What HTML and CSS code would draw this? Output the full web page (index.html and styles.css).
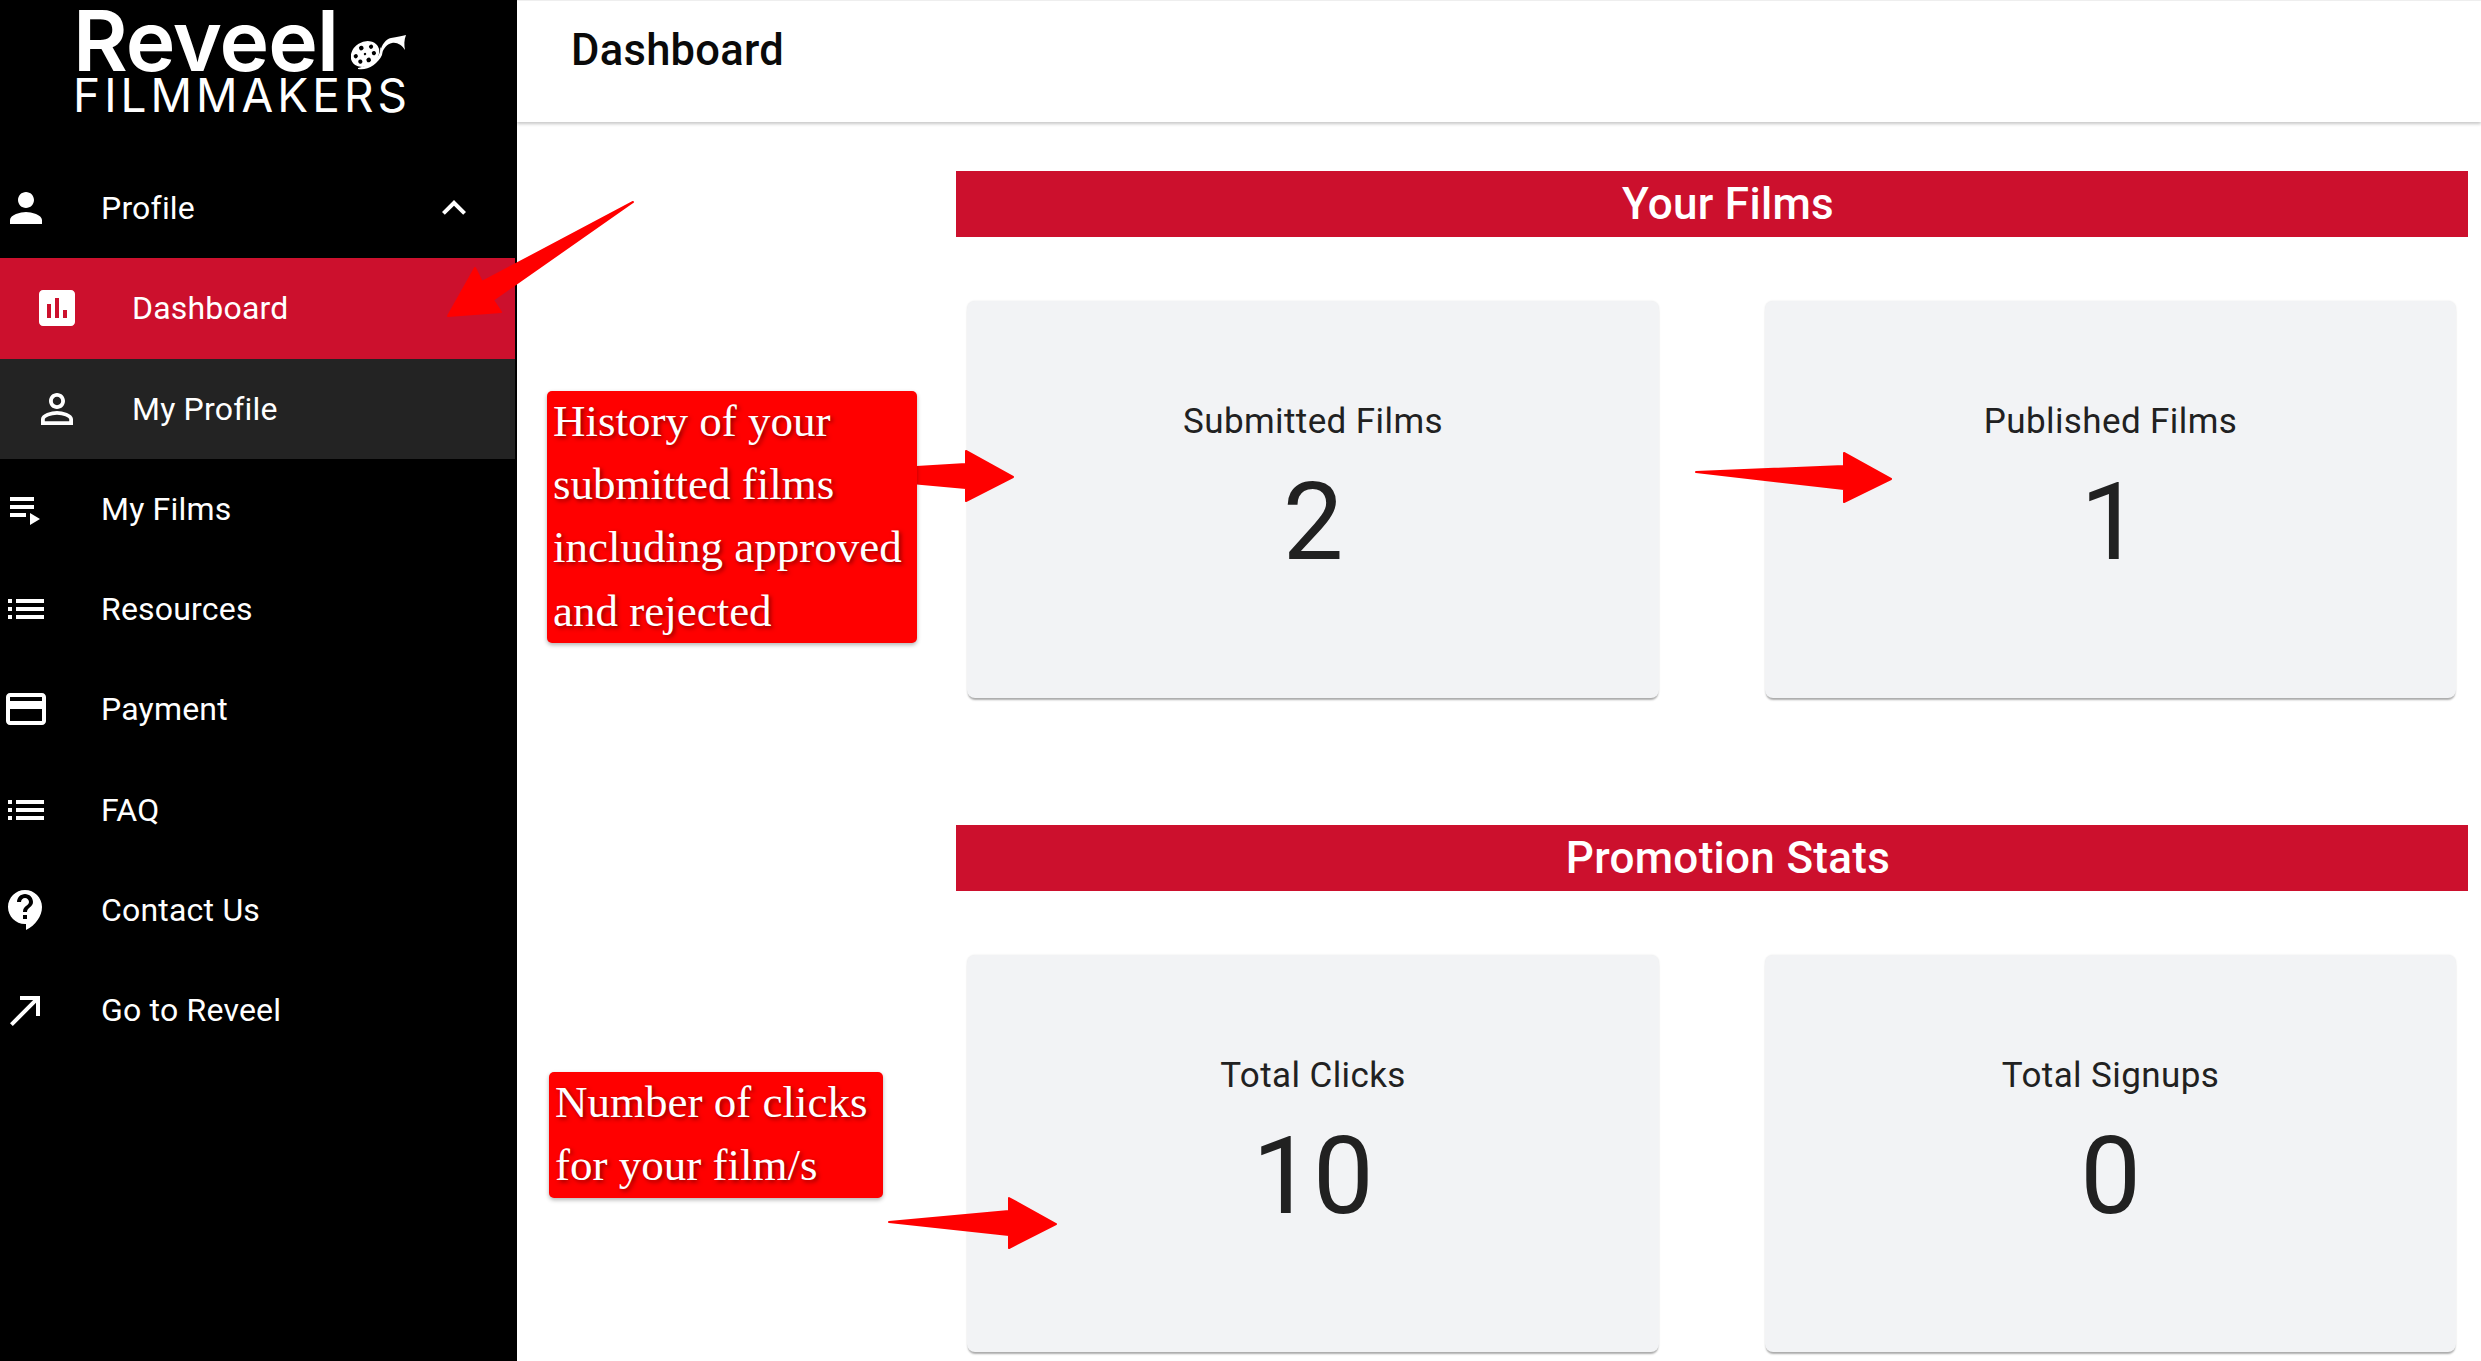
FILE: index.html
```html
<!DOCTYPE html>
<html lang="en">
<head>
<meta charset="utf-8">
<title>Reveel Filmmakers Dashboard</title>
<link rel="stylesheet" href="styles.css">
</head>
<body>
<div class="page">
  <aside class="sidebar">
    <div class="logo">
      <div class="logo-top">
        <span class="logo-word">Reveel</span>
        <svg class="logo-reel" viewBox="0 0 55 36" aria-hidden="true">
          <path class="reel-fill" d="M29 17C31 9 35 4 40 3C46 2 51 1 55 0C53 5 53 10 54 15C51 10 46 7 41 8C36 9 33 13 31 18Z"/>
          <path class="reel-fill" d="M7 34C16 36 27 29 31 20C32 17 31 14 29 12C31 19 23 30 7 33Z"/>
          <g transform="rotate(-32 14 19)">
            <ellipse class="reel-fill" cx="14" cy="19" rx="15" ry="12"/>
            <circle class="reel-hole" cx="14" cy="12" r="2.3"/>
            <circle class="reel-hole" cx="14" cy="26" r="2.3"/>
            <circle class="reel-hole" cx="5" cy="16" r="2.1"/>
            <circle class="reel-hole" cx="23" cy="16" r="2.1"/>
            <circle class="reel-hole" cx="6" cy="23" r="2.1"/>
            <circle class="reel-hole" cx="22" cy="23" r="2.1"/>
            <circle class="reel-hole" cx="14" cy="19" r="1.2"/>
          </g>
        </svg>
      </div>
      <div class="logo-sub">FILMMAKERS</div>
    </div>
    <nav class="nav">
      <div class="nav-item">
        <svg class="icon" viewBox="0 0 24 24"><path d="M12 12c2.21 0 4-1.79 4-4s-1.79-4-4-4-4 1.79-4 4 1.79 4 4 4zm0 2c-2.67 0-8 1.34-8 4v2h16v-2c0-2.66-5.33-4-8-4z"/></svg>
        <span class="nav-text">Profile</span>
        <svg class="icon chevron" viewBox="0 0 24 24"><path d="M12 8l-6 6 1.41 1.41L12 10.83l4.59 4.58L18 14z"/></svg>
      </div>
      <div class="nav-item sub active">
        <svg class="icon" viewBox="0 0 24 24"><path d="M19 3H5c-1.1 0-2 .9-2 2v14c0 1.1.9 2 2 2h14c1.1 0 2-.9 2-2V5c0-1.1-.9-2-2-2zM9 17H7v-7h2v7zm4 0h-2V7h2v10zm4 0h-2v-4h2v4z"/></svg>
        <span class="nav-text">Dashboard</span>
      </div>
      <div class="nav-item sub dim">
        <svg class="icon" viewBox="0 0 24 24"><path d="M12 5.9c1.16 0 2.1.94 2.1 2.1s-.94 2.1-2.1 2.1S9.9 9.16 9.9 8s.94-2.1 2.1-2.1m0 9c2.97 0 6.1 1.46 6.1 2.1v1.1H5.9V17c0-.64 3.13-2.1 6.1-2.1M12 4C9.79 4 8 5.79 8 8s1.79 4 4 4 4-1.79 4-4-1.79-4-4-4zm0 9c-2.67 0-8 1.34-8 4v3h16v-3c0-2.66-5.33-4-8-4z"/></svg>
        <span class="nav-text">My Profile</span>
      </div>
      <div class="nav-item">
        <svg class="icon" viewBox="0 0 24 24"><path d="M4 10h12v2H4zm0-4h12v2H4zm0 8h8v2H4zm10 0v6l5-3z"/></svg>
        <span class="nav-text">My Films</span>
      </div>
      <div class="nav-item">
        <svg class="icon" viewBox="0 0 24 24"><path d="M3 13h2v-2H3v2zm0 4h2v-2H3v2zm0-8h2V7H3v2zm4 4h14v-2H7v2zm0 4h14v-2H7v2zM7 7v2h14V7H7z"/></svg>
        <span class="nav-text">Resources</span>
      </div>
      <div class="nav-item">
        <svg class="icon" viewBox="0 0 24 24"><path d="M20 4H4c-1.11 0-1.99.89-1.99 2L2 18c0 1.11.89 2 2 2h16c1.11 0 2-.89 2-2V6c0-1.11-.89-2-2-2zm0 14H4v-6h16v6zm0-10H4V6h16v2z"/></svg>
        <span class="nav-text">Payment</span>
      </div>
      <div class="nav-item">
        <svg class="icon" viewBox="0 0 24 24"><path d="M3 13h2v-2H3v2zm0 4h2v-2H3v2zm0-8h2V7H3v2zm4 4h14v-2H7v2zm0 4h14v-2H7v2zM7 7v2h14V7H7z"/></svg>
        <span class="nav-text">FAQ</span>
      </div>
      <div class="nav-item">
        <svg class="icon" viewBox="0 0 24 24"><path d="M11.5 2C6.81 2 3 5.81 3 10.5S6.81 19 11.5 19h.5v3c4.86-2.34 8-7 8-11.5C20 5.81 16.19 2 11.5 2zm1 14.5h-2v-2h2v2zm0-3.5h-2c0-3.25 3-3 3-5 0-1.1-.9-2-2-2s-2 .9-2 2h-2c0-2.21 1.79-4 4-4s4 1.79 4 4c0 2.5-3 2.75-3 5z"/></svg>
        <span class="nav-text">Contact Us</span>
      </div>
      <div class="nav-item">
        <svg class="icon" viewBox="0 0 24 24"><path d="M9 5v2h6.59L4 18.59 5.41 20 17 8.41V15h2V5z"/></svg>
        <span class="nav-text">Go to Reveel</span>
      </div>
    </nav>
  </aside>

  <main class="main">
    <header class="topbar"><h1 class="topbar-title">Dashboard</h1></header>
    <div class="content">
      <section class="section">
        <h2 class="section-title">Your Films</h2>
        <div class="cards">
          <div class="card"><div class="card-label">Submitted Films</div><div class="card-value">2</div></div>
          <div class="card"><div class="card-label">Published Films</div><div class="card-value">1</div></div>
        </div>
      </section>
      <section class="section">
        <h2 class="section-title">Promotion Stats</h2>
        <div class="cards">
          <div class="card"><div class="card-label">Total Clicks</div><div class="card-value">10</div></div>
          <div class="card"><div class="card-label">Total Signups</div><div class="card-value">0</div></div>
        </div>
      </section>
    </div>
  </main>

  <svg class="arrows" viewBox="0 0 2481 1361" aria-hidden="true">
    <polygon points="633,202 482,282 475,268 448,316 501,312 493,300"/>
    <polygon points="900,468 966,464 966,451 1013,477 966,501 966,488 900,482"/>
    <polygon points="1696,472 1844,466 1844,453 1891,479 1844,502 1844,489"/>
    <polygon points="889,1222 1009,1211 1009,1198 1056,1224 1009,1248 1009,1235"/>
  </svg>

  <div class="callout callout-history"><div class="callout-text">History of your<br>submitted films<br>including approved<br>and rejected</div></div>
  <div class="callout callout-clicks"><div class="callout-text">Number of clicks<br>for your film/s</div></div>
</div>
</body>
</html>
```
FILE: styles.css
```css
* { box-sizing: border-box; }
html, body { margin: 0; padding: 0; background: #fff; }
body { font-family: Roboto, "Liberation Sans", sans-serif; }

.page {
  position: relative;
  display: flex;
  width: 2481px;
  height: 1361px;
  overflow: hidden;
}

.sidebar {
  flex: 0 0 517px;
  background: #000;
  color: #fff;
}

.logo {
  height: 158px;
  padding-left: 73px;
}
.logo-top {
  display: flex;
  height: 75px;
}
.logo-word {
  font-family: Inter, sans-serif;
  font-weight: 600;
  font-size: 84px;
  line-height: 82px;
  letter-spacing: -1px;
}
.logo-reel {
  width: 55px;
  height: 36px;
  margin: 35px 0 0 13px;
}
.reel-fill { fill: #fff; }
.reel-hole { fill: #000; }
.logo-sub {
  font-family: Inter, sans-serif;
  font-weight: 400;
  font-size: 46px;
  line-height: 40px;
  letter-spacing: 4px;
}

.nav { width: 515px; }
.nav-item {
  display: flex;
  align-items: center;
  height: 100.25px;
  padding-left: 2px;
}
.nav-item.sub { padding-left: 33px; }
.nav-item.active { background: #cc102d; }
.nav-item.dim { background: #232323; }
.icon {
  flex: 0 0 48px;
  width: 48px;
  height: 48px;
  margin-right: 51px;
  fill: #fff;
}
.icon.chevron {
  margin: 0 37px 0 auto;
}
.nav-text {
  font-size: 32px;
  letter-spacing: 0.2px;
  line-height: 48px;
}

.main {
  flex: 1;
  min-width: 0;
}
.topbar {
  display: flex;
  align-items: center;
  height: 122px;
  padding: 0 0 22px 54px;
  border-top: 1px solid #eee;
  background: #fff;
  box-shadow: 0 2px 3px rgba(0, 0, 0, 0.22);
}
.topbar-title {
  margin: 0;
  font-size: 43.5px;
  font-weight: 500;
  letter-spacing: 0.3px;
  color: #0a0a0a;
}

.content {
  display: flex;
  flex-direction: column;
  gap: 127px;
  padding: 49px 13px 0 439px;
}
.section-title {
  margin: 0;
  height: 66px;
  padding-left: 32px;
  background: #cc102d;
  color: #fff;
  text-align: center;
  font-size: 44px;
  font-weight: 500;
  line-height: 66px;
  letter-spacing: 0.3px;
}
.cards {
  display: grid;
  grid-template-columns: 692px 691px;
  column-gap: 106px;
  margin-top: 64px;
  padding: 0 12px 0 11px;
}
.card {
  height: 397px;
  padding-top: 96px;
  background: #f2f3f5;
  border-radius: 8px;
  box-shadow: 0 3px 2px -1px rgba(0, 0, 0, 0.32), 0 0 2px rgba(0, 0, 0, 0.1);
  text-align: center;
  color: #212121;
}
.card-label {
  font-size: 35px;
  line-height: 50px;
  letter-spacing: 0.4px;
}
.card-value {
  font-size: 108px;
  line-height: 126px;
  margin-top: 12px;
}

.arrows {
  position: absolute;
  left: 0;
  top: 0;
  width: 2481px;
  height: 1361px;
  pointer-events: none;
}
.arrows polygon {
  fill: #ff0000;
  stroke: #ff0000;
  stroke-width: 2;
  stroke-linejoin: round;
}

.callout {
  position: absolute;
  padding: 0 0 0 6px;
  background: #ff0000;
  border-radius: 5px;
  box-shadow: 0 2px 4px rgba(0, 0, 0, 0.3);
  color: #fff;
  font-family: "Liberation Serif", serif;
  font-size: 45px;
  line-height: 63.2px;
  text-shadow: 2px 2px 4px rgba(90, 0, 0, 0.7);
}
.callout-text { margin-top: -1px; }
.callout-history {
  left: 547px;
  top: 391px;
  width: 370px;
  height: 252px;
}
.callout-clicks {
  left: 549px;
  top: 1072px;
  width: 334px;
  height: 126px;
}
```
